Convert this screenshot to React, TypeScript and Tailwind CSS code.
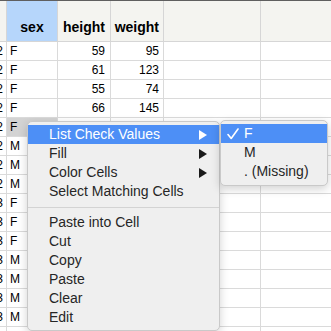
import React from "react";

type Row = { n: string; sex: string; h?: string; w?: string; sel?: boolean };

const ROWS: Row[] = [
  { n: "2", sex: "F", h: "59", w: "95" },
  { n: "2", sex: "F", h: "61", w: "123" },
  { n: "2", sex: "F", h: "55", w: "74" },
  { n: "2", sex: "F", h: "66", w: "145" },
  { n: "2", sex: "F", sel: true },
  { n: "2", sex: "M" },
  { n: "2", sex: "M" },
  { n: "2", sex: "M" },
  { n: "3", sex: "F" },
  { n: "3", sex: "F" },
  { n: "3", sex: "F" },
  { n: "3", sex: "M" },
  { n: "3", sex: "M" },
  { n: "3", sex: "M" },
  { n: "3", sex: "M" },
  { n: "", sex: "" },
];

const MENU_TOP = ["List Check Values", "Fill", "Color Cells", "Select Matching Cells"];
const MENU_BOTTOM = ["Paste into Cell", "Cut", "Copy", "Paste", "Clear", "Edit"];
const SUBMENU = ["Fill", "Color Cells"];

function Arrow({ white }: { white?: boolean }) {
  return (
    <svg width="8" height="10" viewBox="0 0 8 10" className="absolute right-[12px] top-[5px]">
      <polygon points="0,0 8,5 0,10" fill={white ? "#ffffff" : "#1a1a1a"} />
    </svg>
  );
}

function MenuItem({ label, active, arrow }: { label: string; active?: boolean; arrow?: boolean }) {
  return (
    <div
      className={`relative h-[19px] pl-[21px] leading-[19px] whitespace-nowrap ${
        active ? "bg-[#4d8ff6] text-white" : "text-[#262626]"
      }`}
    >
      {label}
      {arrow && <Arrow white={active} />}
    </div>
  );
}

export default function App() {
  return (
    <div className="relative w-[331px] h-[331px] overflow-hidden bg-white font-['Liberation_Sans',Arial,sans-serif] text-black">
      {/* Header */}
      <div className="flex h-[42px] border-t border-b border-t-[#5f5f5f] border-b-[#d6d6d6] bg-[#f4f4f0] text-[14px] font-bold">
        <div className="w-[7px] shrink-0 border-r border-[#d6d6d6]" />
        <div className="w-[51px] shrink-0 flex items-end justify-center pb-[3px] bg-[#b6d6fb] border-r border-[#d6d6d6]">
          sex
        </div>
        <div className="w-[53px] shrink-0 flex items-end justify-end pb-[3px] pr-[5px] border-r border-[#d6d6d6]">
          height
        </div>
        <div className="w-[53px] shrink-0 flex items-end justify-end pb-[3px] pr-[4px] border-r border-[#d6d6d6]">
          weight
        </div>
        <div className="w-[97px] shrink-0 border-r border-[#d6d6d6]" />
        <div className="flex-1" />
      </div>

      {/* Rows */}
      {ROWS.map((r, i) => (
        <div key={i} className="flex h-[19px] border-b border-[#dadada] text-[12px] leading-[18px]">
          <div className="w-[7px] shrink-0 overflow-hidden flex justify-end pr-[3px] border-r border-[#dadada]">
            {r.n}
          </div>
          <div
            className={`w-[51px] shrink-0 pl-[3px] border-r border-[#dadada] ${r.sel ? "bg-[#d3d3d3]" : ""}`}
          >
            {r.sex}
          </div>
          <div className="w-[53px] shrink-0 text-right pr-[5px] border-r border-[#dadada]">{r.h}</div>
          <div className="w-[53px] shrink-0 text-right pr-[4px] border-r border-[#dadada]">{r.w}</div>
          <div className="w-[97px] shrink-0 border-r border-[#dadada]" />
          <div className="flex-1" />
        </div>
      ))}

      {/* Context menu */}
      <div className="absolute left-[27px] top-[121px] w-[193px] py-[3px] rounded-[5px] bg-[#efefef] border border-[#c9c9c9] shadow-[0_3px_10px_rgba(0,0,0,0.18)] text-[14px]">
        {MENU_TOP.map((m, i) => (
          <MenuItem key={m} label={m} active={i === 0} arrow={i === 0 || SUBMENU.includes(m)} />
        ))}
        <div className="h-[12px] flex items-center">
          <div className="w-full h-px bg-[#d3d3d3]" />
        </div>
        {MENU_BOTTOM.map((m) => (
          <MenuItem key={m} label={m} />
        ))}
      </div>

      {/* Submenu */}
      <div className="absolute left-[220px] top-[120px] w-[108px] pt-[3px] pb-[4px] rounded-[5px] bg-[#efefef] border border-[#c9c9c9] shadow-[0_3px_10px_rgba(0,0,0,0.18)] text-[14px]">
        <div className="relative h-[19px] pl-[23px] leading-[19px] bg-[#4d8ff6] text-white">
          <svg width="12" height="12" viewBox="0 0 12 12" className="absolute left-[6px] top-[4px]">
            <path d="M1 6.5 L4.2 10.5 L11 1" fill="none" stroke="#ffffff" strokeWidth="1.6" strokeLinecap="round" strokeLinejoin="round" />
          </svg>
          F
        </div>
        <div className="h-[19px] pl-[23px] leading-[19px] text-[#262626]">M</div>
        <div className="h-[19px] pl-[23px] leading-[19px] text-[#262626] whitespace-nowrap">. (Missing)</div>
      </div>
    </div>
  );
}
